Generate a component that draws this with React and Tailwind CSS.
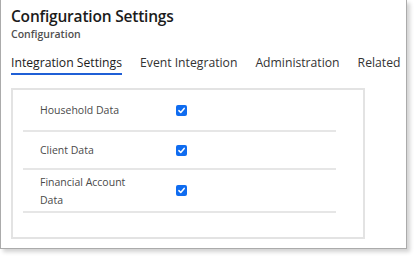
export default function App() {
  const rows = [
    { label: "Household Data", h: "h-[42px]" },
    { label: "Client Data", h: "h-[38px]" },
    { label: "Financial Account Data", h: "h-[43px]", wrap: true },
  ];

  return (
    <div className="w-[417px] h-[258px] bg-white" style={{ fontFamily: '"Open Sans", "Noto Sans", sans-serif' }}>
      <div className="w-[407px] h-[249px] border-l border-r border-b border-[#ababab] shadow-[3px_3px_4px_rgba(0,0,0,0.18)] pl-[10px] pt-[5px]">
        {/* header */}
        <h1 className="text-[15.5px] leading-[22px] font-semibold text-[#1b1b1b] tracking-[-0.2px]">Configuration Settings</h1>
        <p className="text-[10.5px] leading-[14px] font-semibold text-[#505050]">Configuration</p>

        {/* tabs */}
        <div className="flex flex-nowrap whitespace-nowrap gap-[18px] mt-[13px] text-[12.2px] leading-[18px] text-[#333]">
          <div className="shrink-0 pb-[1px] border-b-[2px] border-[#1f5fd6] text-[#1b1b1b]">Integration Settings</div>
          <div className="shrink-0">Event Integration</div>
          <div className="shrink-0">Administration</div>
          <div className="shrink-0">Related</div>
        </div>

        {/* section */}
        <div className="mt-[13px] w-[354px] h-[151px] border-[2px] border-[#e3e3e3] pl-[10px]">
          {rows.map((row) => (
            <div key={row.label} className={`w-[313px] flex items-center border-b-[2px] border-[#e6e6e6] ${row.h}`}>
              <div className="w-[153px] pl-[17px] text-[10.5px] leading-[18px] text-[#4a4a4a]">
                {row.wrap ? (<>Financial Account<br />Data</>) : row.label}
              </div>
              <span className="w-[11px] h-[11px] rounded-[2px] bg-[#0f6cf0] flex items-center justify-center">
                <svg viewBox="0 0 12 12" className="w-[9px] h-[9px]">
                  <path d="M2.5 6.2 L5 8.6 L9.6 3.2" fill="none" stroke="white" strokeWidth="2" strokeLinecap="round" strokeLinejoin="round" />
                </svg>
              </span>
            </div>
          ))}
        </div>
      </div>
    </div>
  );
}
